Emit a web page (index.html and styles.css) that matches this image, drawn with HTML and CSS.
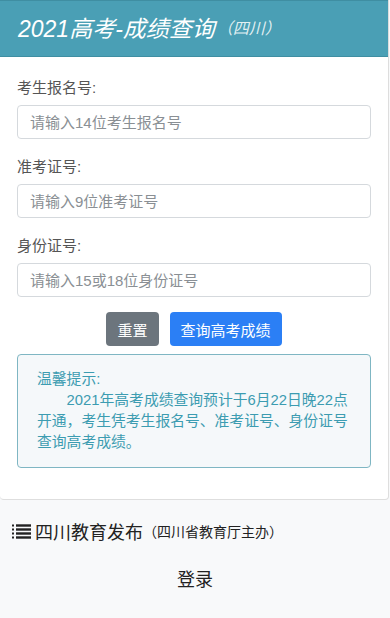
FILE: index.html
```html
<!DOCTYPE html>
<html lang="zh-CN">
<head>
<meta charset="utf-8">
<title>2021高考-成绩查询</title>
<link rel="stylesheet" href="styles.css">
</head>
<body>
<div class="card">
  <div class="card-header">
    <span class="title">2021高考-成绩查询</span><span class="sub">（四川）</span>
  </div>
  <div class="card-body">
    <div class="group">
      <label class="label">考生报名号:</label>
      <input class="input" type="text" placeholder="请输入14位考生报名号">
    </div>
    <div class="group">
      <label class="label">准考证号:</label>
      <input class="input" type="text" placeholder="请输入9位准考证号">
    </div>
    <div class="group">
      <label class="label">身份证号:</label>
      <input class="input" type="text" placeholder="请输入15或18位身份证号">
    </div>
    <div class="actions">
      <button class="btn btn-gray" type="button">重置</button>
      <button class="btn btn-blue" type="button">查询高考成绩</button>
    </div>
    <div class="alert">
      <div class="alert-title">温馨提示:</div>
      <p class="alert-text">2021年高考成绩查询预计于6月22日晚22点开通，考生凭考生报名号、准考证号、身份证号查询高考成绩。</p>
    </div>
  </div>
</div>
<div class="footer">
  <div class="brand">
    <svg class="list-icon" width="19" height="15" viewBox="0 0 19 15" aria-hidden="true">
      <rect x="0" y="0.5" width="2" height="2" fill="#222"/>
      <rect x="0" y="4.5" width="2" height="2" fill="#222"/>
      <rect x="0" y="8.5" width="2" height="2" fill="#222"/>
      <rect x="0" y="12.5" width="2" height="2" fill="#222"/>
      <rect x="4" y="0.3" width="15" height="2.4" fill="#222"/>
      <rect x="4" y="4.3" width="15" height="2.4" fill="#222"/>
      <rect x="4" y="8.3" width="15" height="2.4" fill="#222"/>
      <rect x="4" y="12.3" width="15" height="2.4" fill="#222"/>
    </svg>
    <span class="brand-name">四川教育发布</span><span class="brand-sub">（四川省教育厅主办）</span>
  </div>
  <div class="login">登录</div>
</div>
</body>
</html>
```
FILE: styles.css
```css
* { box-sizing: border-box; }
html, body { margin: 0; padding: 0; }
body {
  width: 390px;
  height: 618px;
  overflow: hidden;
  background: #f8f9fa;
  font-family: "Liberation Sans", "Noto Sans CJK SC", sans-serif;
  color: #212529;
}
.card {
  width: 389px;
  background: #fff;
  border: 1px solid rgba(0,0,0,.13);
  border-top: none;
  border-left: none;
  border-radius: 0 0 4px 4px;
}
.card-header {
  height: 57px;
  background: #4a9fb5;
  border-top: 1px solid #3f8ea2;
  border-bottom: 1px solid #3f8ea2;
  padding: 0 18px 3px 18px;
  display: flex;
  align-items: center;
  color: #fff;
  font-style: italic;
}
.title { font-size: 23px; }
.sub { font-size: 16px; color: rgba(255,255,255,.85); margin-left: 2px; }
.card-body { padding: 20px 17px 31px 17px; }
.group { margin-bottom: 17px; }
.label {
  display: block;
  font-size: 15px;
  line-height: 22px;
  color: #555;
  margin-bottom: 6px;
}
.input {
  display: block;
  width: 100%;
  height: 34px;
  border: 1px solid #d5d9dd;
  border-radius: 4px;
  padding: 0 12px;
  font-size: 15px;
  font-family: inherit;
  color: #495057;
  background: #fff;
}
.input::placeholder { color: #8a8f94; }
.actions {
  display: flex;
  justify-content: center;
  gap: 11px;
  margin-top: -2px;
}
.btn {
  height: 34px;
  padding: 0 11px;
  border: none;
  border-radius: 4px;
  color: #fff;
  font-size: 15px;
  font-family: inherit;
}
.btn-gray { background: #6c757d; }
.btn-blue { background: #2b7ff5; }
.alert {
  margin-top: 8px;
  border: 1px solid #7fb6c3;
  border-radius: 4px;
  background: #f5f8fa;
  padding: 14px 15px 14px 19px;
  color: #3c9cb1;
  font-size: 14.8px;
  line-height: 21px;
}
.alert-text { margin: 0; text-indent: 2em; }
.footer { padding: 17px 12px 0 12px; }
.brand {
  display: flex;
  align-items: center;
  height: 28px;
  color: #222;
}
.list-icon { flex: none; margin-right: 4px; }
.brand-name { font-size: 18px; }
.brand-sub { font-size: 14px; }
.login {
  margin-top: 22px;
  text-align: center;
  font-size: 18px;
  line-height: 26px;
  color: #222;
}
```
